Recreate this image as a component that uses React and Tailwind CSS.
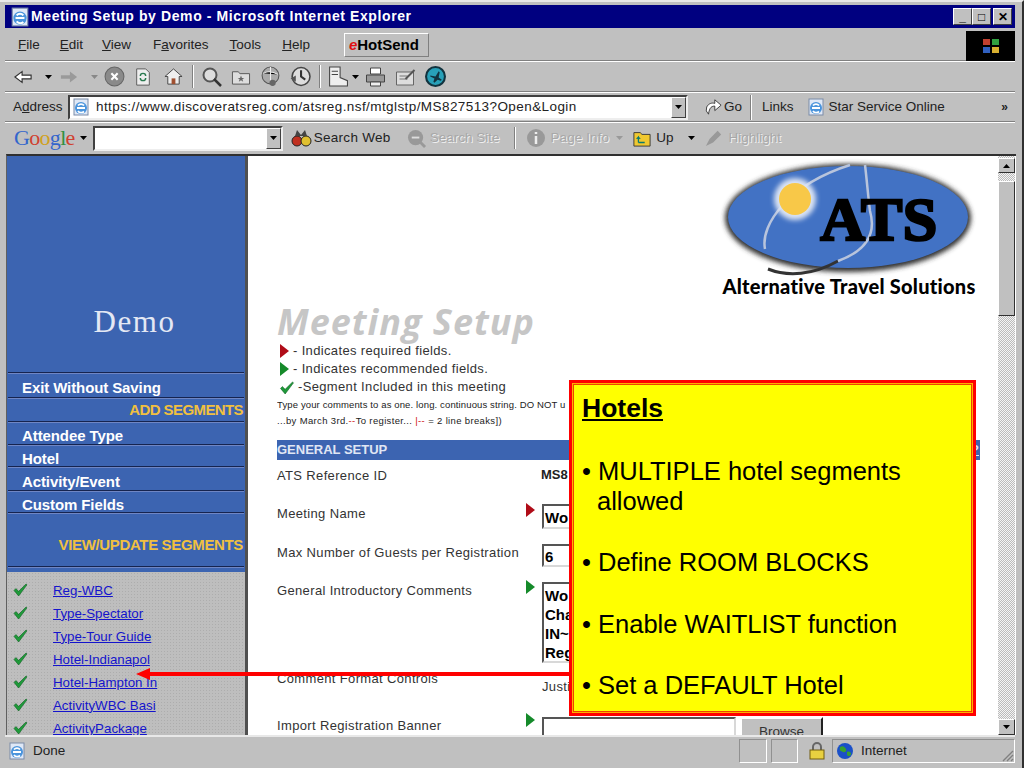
const SANS = "font-[Liberation_Sans,Arial,sans-serif]";
const Ie = ({ className = "" }) => (
  <svg viewBox="0 0 18 18" className={className}>
    <rect x="2" y="1" width="14" height="16" fill="#dfe8f6" stroke="#7a8ba8" strokeWidth="1" />
    <circle cx="9" cy="10" r="6" fill="#4a94dc" />
    <path d="M5 10h8M6 7.5a4 4 0 0 1 6 0M6 13a4 4 0 0 0 6 .5" stroke="#fff" strokeWidth="1.8" fill="none" />
  </svg>
);
const Drop = ({ c = "#000", className = "" }) => (
  <svg viewBox="0 0 7 4" className={`w-[7px] h-[4px] ${className}`}><path d="M0 0h7L3.5 4z" fill={c} /></svg>
);
const Combo = () => (
  <div className="w-[15px] self-stretch bg-[#c0c0c0] border border-t-white border-l-white border-r-[#404040] border-b-[#404040] flex items-center justify-center"><Drop /></div>
);
const Tick = ({ className = "" }) => (
  <svg viewBox="0 0 16 14" className={className}>
    <path d="M1 8l2-2 3 3 8-8 1 1-9 12z" fill="#1f9a3a" stroke="#0c5a1e" strokeWidth="0.6" />
  </svg>
);
const Marker = ({ c, className = "" }) => (
  <svg viewBox="0 0 9 14" className={`w-[9px] h-[14px] ${className}`}><path d="M0 0l9 7-9 7z" fill={c} /></svg>
);
const Ic = ({ cls, children }) => <svg viewBox="0 0 20 20" className={cls}>{children}</svg>;

const links = ["Reg-WBC", "Type-Spectator", "Type-Tour Guide", "Hotel-Indianapol", "Hotel-Hampton In", "ActivityWBC Basi", "ActivityPackage"];

const Line = () => <div className="h-px box-content mx-[1px] bg-[#16244f] border-b border-b-[#6f86c4]" />;
const NavItem = ({ children, cls }) => (
  <div className={`pl-[15px] pt-[5px] text-[15px] leading-[18px] font-bold tracking-[-0.1px] text-white flex items-center ${cls}`}>{children}</div>
);

const Row = ({ label, labelCls, marker, markerCls, valueCls, children, h }) => (
  <div className={`grid grid-cols-[249px_16px_1fr] ${h}`}>
    <div className={`text-[13px] leading-[16px] text-[#333] tracking-[0.35px] whitespace-nowrap ${labelCls}`}>{label}</div>
    <div className={markerCls}>{marker}</div>
    <div className={valueCls}>{children}</div>
  </div>
);
const Inset = "border-2 border-t-[#555] border-l-[#555] border-r-[#d8d8d8] border-b-[#d8d8d8] bg-white";

export default function App() {
  return (
    <div className={`relative w-[1024px] h-[768px] overflow-hidden bg-[#c0c0c0] pt-[5px] pl-[5px] pr-[7px] border-t-2 border-t-[#e8e8e8] border-r-2 border-r-[#303030] text-black ${SANS}`}>
      {/* Title bar */}
      <div className="h-[23px] -mt-[2px] bg-[#000080] flex items-center text-white">
        <Ie className="w-[20px] h-[20px] ml-[5px] shrink-0" />
        <span className="ml-[1px] font-bold text-[14px] tracking-[0.6px] whitespace-nowrap">Meeting Setup by Demo - Microsoft Internet Explorer</span>
        <div className="ml-auto mr-[3px] flex items-center text-black">
          {["_", "□", "✕"].map((t, i) => (
            <div key={t} className={`w-[19px] h-[17px] bg-[#c0c0c0] border border-t-white border-l-white border-r-[#404040] border-b-[#404040] flex items-center justify-center text-[12px] font-bold leading-none ${i === 2 ? "ml-[2px]" : ""}`}>{t}</div>
          ))}
        </div>
      </div>

      {/* Menu bar */}
      <div className="h-[31px] mt-[2px] border-b border-b-[#808080] flex items-center text-[13.5px] text-[#222] relative">
        <span className="ml-[13px]"><u>F</u>ile</span>
        <span className="ml-[20px]"><u>E</u>dit</span>
        <span className="ml-[19px]"><u>V</u>iew</span>
        <span className="ml-[22px]">F<u>a</u>vorites</span>
        <span className="ml-[21px]"><u>T</u>ools</span>
        <span className="ml-[21px]"><u>H</u>elp</span>
        <div className="ml-[34px] w-[85px] h-[24px] border border-t-white border-l-white border-r-[#808080] border-b-[#808080] flex items-center pl-[4px] font-bold text-[15px] text-black">
          <span className="text-[#e01010] italic font-bold">e</span>HotSend
        </div>
        <div className="ml-auto w-[49px] h-[30px] bg-black flex items-center justify-center -mb-[1px]">
          <svg viewBox="0 0 20 20" className="w-[20px] h-[20px]">
            <rect x="2" y="3" width="7" height="6" fill="#c04030" /><rect x="11" y="3" width="7" height="6" fill="#30a040" />
            <rect x="2" y="11" width="7" height="6" fill="#3060c0" /><rect x="11" y="11" width="7" height="6" fill="#d8b030" />
          </svg>
        </div>
      </div>

      {/* Toolbar */}
      <div className="h-[31px] border-t border-t-white border-b border-b-[#808080] flex items-center">
        <Ic cls="w-[18px] h-[18px] ml-[9px]"><path d="M1 10l8-6v4h10v4H9v4z" fill="#fff" stroke="#333" strokeWidth="1.3" /></Ic>
        <Drop className="ml-[13px]" />
        <Ic cls="w-[18px] h-[18px] ml-[8px]"><path d="M19 10l-8-6v4H1v4h10v4z" fill="#9a9a9a" /></Ic>
        <Drop c="#888" className="ml-[13px]" />
        <Ic cls="w-[21px] h-[21px] ml-[6px]"><circle cx="10" cy="10" r="9" fill="#8a8a8a" stroke="#666" /><path d="M7 7l6 6M13 7l-6 6" stroke="#fff" strokeWidth="2" /></Ic>
        <Ic cls="w-[18px] h-[20px] ml-[9px]"><path d="M3 1h10l4 4v14H3z" fill="#eee" stroke="#555" /><path d="M7 9a3 3 0 0 1 6 0M13 11a3 3 0 0 1-6 0" stroke="#2a7a50" strokeWidth="1.6" fill="none" /></Ic>
        <Ic cls="w-[19px] h-[19px] ml-[12px]"><path d="M1 10l9-8 9 8h-3v8H4v-8z" fill="#eee" stroke="#444" /><rect x="8" y="12" width="4" height="6" fill="#a05030" /></Ic>
        <div className="w-px h-[23px] bg-[#808080] ml-[9px] border-r border-r-white box-content" />
        <Ic cls="w-[20px] h-[20px] ml-[8px]"><circle cx="8" cy="8" r="6.5" fill="#ddd" stroke="#555" strokeWidth="2" /><path d="M12 12l7 7" stroke="#333" strokeWidth="2.5" /></Ic>
        <Ic cls="w-[20px] h-[19px] ml-[9px]"><path d="M1 5h6l2 2h10v11H1z" fill="#ddd" stroke="#555" /><path d="M10 9l1 2.5h2.5l-2 1.5.8 2.5-2.3-1.5-2.3 1.5.8-2.5-2-1.5H9z" fill="#666" /></Ic>
        <Ic cls="w-[21px] h-[21px] ml-[9px]"><circle cx="10" cy="9" r="8" fill="#aaa" stroke="#555" /><path d="M3 7c4-2 9-2 14 1M10 1v16" stroke="#eee" /><circle cx="12" cy="16" r="3" fill="#666" /></Ic>
        <Ic cls="w-[22px] h-[21px] ml-[8px]"><circle cx="11" cy="10" r="8.5" fill="#ddd" stroke="#444" strokeWidth="1.5" /><path d="M11 4v6l4 3" stroke="#333" strokeWidth="2" fill="none" /><path d="M1 12l5-3v6z" fill="#555" /></Ic>
        <div className="w-px h-[23px] bg-[#808080] ml-[8px] border-r border-r-white box-content" />
        <Ic cls="w-[22px] h-[21px] ml-[6px]"><path d="M2 1h10v10l7 3v5H2z" fill="#eee" stroke="#444" /><path d="M4 5h6M4 8h6" stroke="#444" /></Ic>
        <Drop className="ml-[3px]" />
        <Ic cls="w-[21px] h-[20px] ml-[6px]"><path d="M5 1h10v6H5z" fill="#fff" stroke="#444" /><path d="M1 8h18v7H1z" fill="#999" stroke="#444" /><path d="M5 15h10v4H5z" fill="#eee" stroke="#444" /></Ic>
        <Ic cls="w-[21px] h-[20px] ml-[9px]"><path d="M1 5h17v13H1z" fill="#ddd" stroke="#666" /><path d="M4 9h8M4 12h8" stroke="#777" /><path d="M10 12l9-9" stroke="#555" strokeWidth="2" /></Ic>
        <Ic cls="w-[21px] h-[21px] ml-[9px]"><circle cx="10" cy="10" r="9" fill="#28a0b8" stroke="#12333f" strokeWidth="2" /><path d="M5 9l5 1 3-5 1 1-1 5 3 2-1 1-3-1-3 3-1-1 1-3-4-2z" fill="#12333f" /></Ic>
      </div>

      {/* Address bar */}
      <div className="h-[30px] border-t border-t-white border-b border-b-[#808080] flex items-center text-[13.5px] text-[#222]">
        <span className="ml-[8px] w-[55px]">A<u>d</u>dress</span>
        <div className="w-[620px] h-[25px] border-2 border-t-[#404040] border-l-[#404040] border-r-[#eee] border-b-[#eee] bg-white flex items-center">
          <Ie className="w-[18px] h-[18px] ml-[2px]" />
          <span className="ml-[6px] pt-[1px] text-[13.5px] tracking-[0.42px] whitespace-nowrap">https://www.discoveratsreg.com/atsreg.nsf/mtglstp/MS827513?Open&amp;Login</span>
          <div className="ml-auto h-full flex"><Combo /></div>
        </div>
        <Ic cls="w-[18px] h-[18px] ml-[16px]"><path d="M5 18a7 7 0 0 1-2-8c2-4 6-5 9-4V2l7 6-7 6V9c-3 0-6 1-7 9z" fill="#fff" stroke="#333" /></Ic>
        <span className="ml-[2px]">Go</span>
        <div className="w-px h-[25px] bg-[#808080] ml-[8px] border-r border-r-white box-content" />
        <span className="ml-[10px]">Links</span>
        <Ie className="w-[18px] h-[18px] ml-[13px]" />
        <span className="ml-[4px] whitespace-nowrap">Star Service Online</span>
        <span className="ml-auto mr-[7px] font-bold text-[12px]">»</span>
      </div>

      {/* Google bar */}
      <div className="h-[31px] border-t border-t-white flex items-center text-[13.5px]">
        <span className="ml-[9px] font-[Liberation_Serif,serif] text-[22px] leading-none tracking-[-0.7px]">
          <span className="text-[#3366cc]">G</span><span className="text-[#d04030]">o</span><span className="text-[#d0a020]">o</span><span className="text-[#3366cc]">g</span><span className="text-[#309040]">l</span><span className="text-[#d04030]">e</span>
        </span>
        <Drop className="ml-[5px]" />
        <div className="ml-[6px] w-[190px] h-[25px] border-2 border-t-[#404040] border-l-[#404040] border-r-[#eee] border-b-[#eee] bg-white flex justify-end"><Combo /></div>
        <Ic cls="w-[22px] h-[20px] ml-[7px]"><circle cx="6" cy="13" r="5" fill="#c03020" stroke="#222" /><circle cx="15" cy="13" r="5" fill="#e0c030" stroke="#222" /><path d="M4 8l2-6 4 5 4-5 2 6" fill="#444" /></Ic>
        <span className="ml-[2px] text-[#222] tracking-[0.3px] whitespace-nowrap">Search Web</span>
        <Ic cls="w-[21px] h-[19px] ml-[15px]"><circle cx="9" cy="9" r="8" fill="#999" /><path d="M13 13l6 6" stroke="#999" strokeWidth="3" /><path d="M5 9h8" stroke="#ddd" strokeWidth="2" /></Ic>
        <span className="ml-[3px] text-[#a8a8a8] [text-shadow:1px_1px_0_#f0f0f0] whitespace-nowrap">Search Site</span>
        <div className="w-px h-[22px] bg-[#808080] ml-[15px] border-r border-r-white box-content" />
        <Ic cls="w-[20px] h-[20px] ml-[10px]"><circle cx="10" cy="10" r="9" fill="#999" /><path d="M10 4v2M10 8v8" stroke="#eee" strokeWidth="2.5" /></Ic>
        <span className="ml-[4px] text-[#a8a8a8] tracking-[0.1px] [text-shadow:1px_1px_0_#f0f0f0] whitespace-nowrap">Page Info</span>
        <Drop c="#999" className="ml-[7px]" />
        <Ic cls="w-[20px] h-[18px] ml-[9px]"><path d="M1 4h7l2 2h9v13H1z" fill="#f0c830" stroke="#333" /><path d="M6 15h7M6 15V9l-2 2M6 9l2 2" stroke="#0a7a70" strokeWidth="1.4" fill="none" /></Ic>
        <span className="ml-[4px] text-[#222]">Up</span>
        <Drop className="ml-[15px]" />
        <Ic cls="w-[18px] h-[18px] ml-[10px]"><path d="M1 19l4-8 9-9 4 4-9 9z" fill="#999" /></Ic>
        <span className="ml-[5px] text-[#a8a8a8] [text-shadow:1px_1px_0_#f0f0f0]">Highlight</span>
      </div>

      {/* Content */}
      <div className="ml-[1px] mr-[-1px] mt-[1px] h-[581px] border-t-2 border-t-[#303030] border-l border-l-[#606060] flex overflow-hidden bg-white">
        {/* Sidebar */}
        <div className="w-[238px] shrink-0 flex flex-col bg-[#3c64b1]">
          <div className="h-[216px] shrink-0 flex items-end justify-center pb-[33px] font-[Liberation_Serif,serif] text-[31px] leading-[34px] tracking-[1.6px] text-[#e4e8f4] pl-[17px]">Demo</div>
          <Line />
          <NavItem cls="h-[23px]">Exit Without Saving</NavItem>
          <Line />
          <div className="h-[22px] pr-[2px] flex items-center justify-end text-[15px] font-bold tracking-[-0.6px] text-[#f0c040]">ADD SEGMENTS</div>
          <Line />
          <NavItem cls="h-[21px]">Attendee Type</NavItem>
          <Line />
          <NavItem cls="h-[20px]">Hotel</NavItem>
          <Line />
          <NavItem cls="h-[22px]">Activity/Event</NavItem>
          <Line />
          <NavItem cls="h-[20px]">Custom Fields</NavItem>
          <Line />
          <div className="h-[52px] pt-[10px] pr-[2px] flex items-center justify-end text-[15px] font-bold tracking-[-0.35px] text-[#f0c040]">VIEW/UPDATE SEGMENTS</div>
          <Line />
          <div className="h-[4px] shrink-0" />
          <div className="flex-1 pt-[7px] bg-[#bebebe] bg-[radial-gradient(#adadad_1px,transparent_1px)] bg-[length:3px_3px] overflow-hidden">
            {links.map((l) => (
              <div key={l} className="h-[23px] flex items-center">
                <Tick className="w-[15px] h-[13px] ml-[6px] mb-[2px]" />
                <a className="ml-[25px] text-[13.3px] text-[#1414cc] underline whitespace-nowrap">{l}</a>
              </div>
            ))}
          </div>
        </div>

        {/* Page */}
        <div className="w-[3px] shrink-0 bg-[#505050]" />
        <div className="flex-1 min-w-0 pl-[29px] overflow-hidden">
          <div className="h-[146px] pl-[443px]">
            <svg viewBox="720 157 260 146" className="w-[260px] h-[146px]">
              <defs><filter id="b"><feGaussianBlur stdDeviation="2.5" /></filter></defs>
              <ellipse cx="848" cy="219" rx="123" ry="54" fill="#333" filter="url(#b)" />
              <ellipse cx="848" cy="218" rx="120" ry="51" fill="#4272c4" />
              <path d="M768 270c20 8 45 6 70-8" stroke="#333" strokeWidth="3" fill="none" />
              <path d="M765 250c-5-25 25-65 85-84M838 262c22-8 40-22 32-50 -2-15-3-30-5-46" stroke="#b8c4dc" strokeWidth="2.5" fill="none" />
              <circle cx="795" cy="200" r="21" fill="#dbe4f4" filter="url(#b)" />
              <circle cx="795" cy="200" r="16" fill="#f8c848" />
              <text x="879" y="241" textAnchor="middle" fontFamily="'Liberation Serif',serif" fontWeight="700" fontSize="62" stroke="#000" strokeWidth="2.5" fill="#000" letterSpacing="0.5">ATS</text>
              <text x="849" y="295" textAnchor="middle" fontFamily="Lato,sans-serif" fontWeight="900" fontSize="20" fill="#000" letterSpacing="0.25">Alternative Travel Solutions</text>
            </svg>
          </div>
          <div className="h-[40px] font-[Open_Sans,sans-serif] italic font-bold text-[36px] leading-[39px] tracking-[1px] text-[#c6c6c6] whitespace-nowrap">Meeting Setup</div>
          <div className="h-[18px] flex items-center text-[13px] tracking-[0.35px] text-[#333]"><Marker c="#b00c18" className="ml-[3px]" /><span className="ml-[4px] whitespace-nowrap">- Indicates required fields.</span></div>
          <div className="h-[18px] flex items-center text-[13px] tracking-[0.35px] text-[#333]"><Marker c="#158a2a" className="ml-[3px]" /><span className="ml-[4px] whitespace-nowrap">- Indicates recommended fields.</span></div>
          <div className="h-[18px] flex items-center text-[13px] tracking-[0.35px] text-[#333]"><Tick className="w-[16px] h-[13px] ml-[2px]" /><span className="ml-[3px] whitespace-nowrap">-Segment Included in this meeting</span></div>
          <div className="h-[44px] pt-[1px] text-[9.5px] leading-[16px] text-[#222] whitespace-nowrap overflow-hidden">
            <div className="tracking-[0.13px]">Type your comments to as one. long. continuous string. DO NOT u</div>
            <div className="tracking-[0.35px]">...by March 3rd.<span className="text-[#d01010]">--</span>To register... <span className="text-[#d01010]">|--</span> = 2 line breaks])</div>
          </div>
          <div className="h-[20px] mr-[18px] bg-[#3c64b1] text-[13px] font-bold leading-[20px] text-[#e0e6f4] flex justify-between pr-[1px]">
            <span>GENERAL SETUP</span><span className="underline">?</span>
          </div>
          <Row h="h-[38px]" labelCls="pt-[8px]" valueCls="pt-[7px] text-[13px] font-bold leading-[16px] text-[#222] -ml-px" label="ATS Reference ID">MS8</Row>
          <Row h="h-[40px]" labelCls="pt-[8px]" label="Meeting Name" markerCls="pt-[5px]" marker={<Marker c="#b00c18" />} valueCls="pt-[6px]">
            <div className={`w-[190px] h-[25px] ${Inset} pl-[1px] text-[15px] font-bold leading-[24px]`}>Wo</div>
          </Row>
          <Row h="h-[40px]" labelCls="pt-[7px]" label="Max Number of Guests per Registration" valueCls="pt-[6px]">
            <div className={`w-[190px] h-[23px] ${Inset} pl-[1px] text-[15px] font-bold leading-[22px]`}>6</div>
          </Row>
          <Row h="h-[88px]" labelCls="pt-[5px]" label="General Introductory Comments" markerCls="pt-[2px]" marker={<Marker c="#158a2a" />} valueCls="pt-[4px]">
            <div className={`w-[190px] h-[81px] ${Inset} pl-[1px] pt-[2px] text-[15px] font-bold leading-[19px]`}>
              <div>Wo</div><div>Cha</div><div>IN~</div><div>Reg</div>
            </div>
          </Row>
          <Row h="h-[43px]" labelCls="pt-[5px]" label="Comment Format Controls" valueCls="pt-[13px] text-[13px] tracking-[0.35px] leading-[16px] text-[#333]">Justi</Row>
          <Row h="h-[40px]" labelCls="pt-[9px]" label="Import Registration Banner" markerCls="pt-[4px]" marker={<Marker c="#158a2a" />} valueCls="pt-[8px] flex">
            <div className={`w-[194px] h-[24px] ${Inset}`} />
            <div className="ml-[4px] w-[83px] h-[26px] bg-[#c0c0c0] border-2 border-t-white border-l-white border-r-[#222] border-b-[#222] flex justify-center pt-[3px] text-[13.5px] text-[#333]">Browse</div>
          </Row>
        </div>

        {/* Scrollbar */}
        <div className="w-[17px] shrink-0 mr-[1px] pt-[2px] flex flex-col bg-[#dcdcdc] bg-[repeating-conic-gradient(#bbb_0_25%,#f4f4f4_0_50%)] bg-[length:2px_2px]">
          <div className="h-[15px] bg-[#c0c0c0] border border-t-white border-l-white border-r-[#303030] border-b-[#303030] flex items-center justify-center"><Drop className="rotate-180" /></div>
          <div className="h-[135px] mt-[8px] bg-[#c0c0c0] border border-t-white border-l-white border-r-[#303030] border-b-[#303030]" />
          <div className="flex-1" />
          <div className="h-[16px] bg-[#c0c0c0] border border-t-white border-l-white border-r-[#303030] border-b-[#303030] flex items-center justify-center"><Drop /></div>
        </div>
      </div>

      {/* Status bar */}
      <div className="h-[28px] pt-[2px] border-t-2 border-t-[#e8e8e8] flex items-center text-[13.5px] text-[#222]">
        <Ie className="w-[18px] h-[18px] ml-[3px]" />
        <span className="ml-[7px]">Done</span>
        <div className="ml-auto flex items-center h-full">
          <div className="w-[28px] h-full border border-t-[#909090] border-l-[#909090] border-r-white border-b-white" />
          <div className="w-[27px] h-full ml-[4px] border border-t-[#909090] border-l-[#909090] border-r-white border-b-white" />
          <div className="w-[24px] ml-[7px] h-full flex items-center justify-center">
            <svg viewBox="0 0 16 18" className="w-[16px] h-[18px]"><path d="M4 9V5a4 4 0 0 1 8 0v4" fill="none" stroke="#666" strokeWidth="2" /><rect x="1" y="8" width="14" height="9" fill="#e8d040" stroke="#705c10" /></svg>
          </div>
          <div className="w-[183px] h-full ml-[3px] border border-t-[#909090] border-l-[#909090] border-r-white border-b-white flex items-center">
            <svg viewBox="0 0 16 16" className="w-[16px] h-[16px] ml-[4px]"><circle cx="8" cy="8" r="8" fill="#1a50c8" /><path d="M3 4c3-2 5 0 6 2s-1 4-3 3-4-1-3-5zM10 9c2-1 4 0 4 2s-3 3-4 1z" fill="#38a030" /></svg>
            <span className="ml-[8px]">Internet</span>
            <svg viewBox="0 0 14 14" className="ml-auto w-[14px] h-[14px] self-end"><path d="M13 3L3 13M13 7l-6 6M13 11l-2 2" stroke="#808080" strokeWidth="1.4" /></svg>
          </div>
        </div>
      </div>

      {/* Overlay: callout arrow */}
      <div className="absolute left-[148px] top-[670px] w-[424px] h-[4px] bg-[#ff0000]" />
      <svg viewBox="0 0 14 14" className="absolute left-[136px] top-[665px] w-[14px] h-[14px]"><path d="M0 7l14-6v12z" fill="#ff0000" /></svg>

      {/* Overlay: callout */}
      <div className="absolute left-[569px] top-[378px] w-[407px] h-[336px] border-[3px] border-[#ff0000] p-px bg-[#ffb000]">
        <div className="h-full border border-[#f04000] bg-[#ffff00] pl-[8px] pt-[8px] text-[25.5px] leading-[30.7px] text-black">
          <div className="font-bold underline text-[26.5px]">Hotels</div>
          <div className="mt-[32px]">• MULTIPLE hotel segments</div>
          <div className="pl-[15px]">allowed</div>
          <div className="mt-[30px]">• Define ROOM BLOCKS</div>
          <div className="mt-[31px]">• Enable WAITLIST function</div>
          <div className="mt-[30px]">• Set a DEFAULT Hotel</div>
        </div>
      </div>
    </div>
  );
}
